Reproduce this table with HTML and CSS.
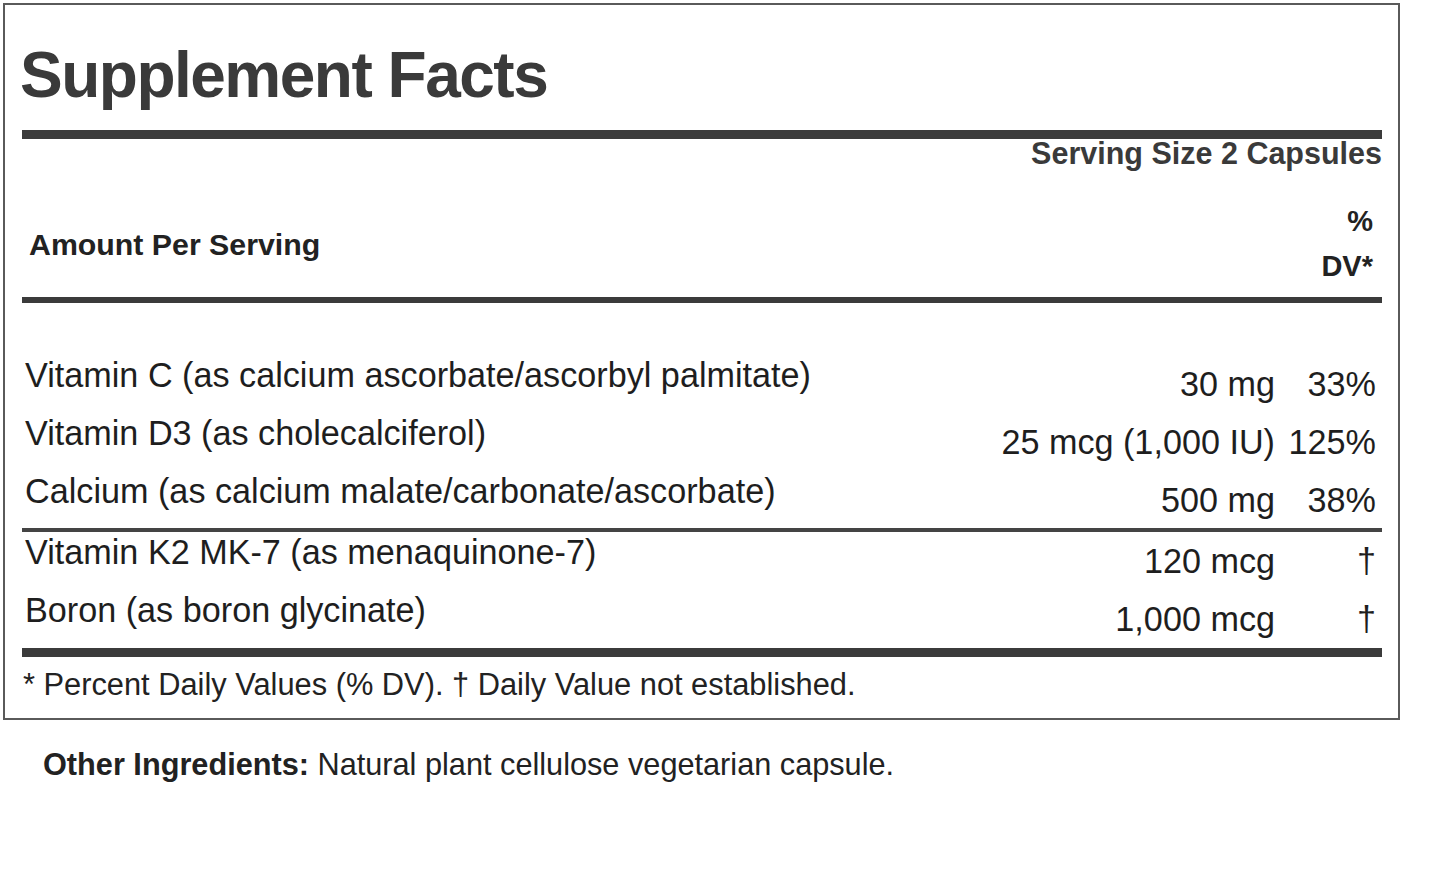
FILE: index.html
```html
<!DOCTYPE html>
<html>
<head>
<meta charset="utf-8">
<link rel="stylesheet" href="styles.css">
</head>
<body>
<div class="facts">
  <h1 class="title">Supplement Facts</h1>
  <div class="rule rule-thick"></div>
  <div class="serving">Serving Size 2 Capsules</div>
  <div class="head">
    <div class="head-label">Amount Per Serving</div>
    <div class="head-dv">%<br>DV*</div>
  </div>
  <div class="rule rule-mid"></div>
  <div class="rows rows-first">
    <div class="row"><span class="name">Vitamin C (as calcium ascorbate/ascorbyl palmitate)</span><span class="amt">30 mg</span><span class="dv">33%</span></div>
    <div class="row"><span class="name">Vitamin D3 (as cholecalciferol)</span><span class="amt">25 mcg (1,000 IU)</span><span class="dv">125%</span></div>
    <div class="row"><span class="name">Calcium (as calcium malate/carbonate/ascorbate)</span><span class="amt">500 mg</span><span class="dv">38%</span></div>
  </div>
  <div class="rule rule-thin"></div>
  <div class="rows">
    <div class="row"><span class="name">Vitamin K2 MK-7 (as menaquinone-7)</span><span class="amt">120 mcg</span><span class="dv">†</span></div>
    <div class="row"><span class="name">Boron (as boron glycinate)</span><span class="amt">1,000 mcg</span><span class="dv">†</span></div>
  </div>
  <div class="rule rule-thick"></div>
  <p class="foot">* Percent Daily Values (% DV). † Daily Value not established.</p>
</div>
<p class="other"><strong>Other Ingredients:</strong> Natural plant cellulose vegetarian capsule.</p>
</body>
</html>
```

FILE: styles.css
```css
* { box-sizing: border-box; }
body {
  margin: 0;
  background: #fff;
  font-family: "Liberation Sans", Arial, sans-serif;
  color: #222;
}
.facts {
  margin: 3px 0 0 3px;
  width: 1397px;
  height: 717px;
  border: 2px solid #5a5a5a;
  padding: 34px 16px 0 17px;
}
.title {
  margin: 0 0 19px -2px;
  font-size: 64px;
  line-height: 72px;
  font-weight: bold;
  letter-spacing: -1.5px;
  color: #3a3a3a;
}
.rule { background: #3b3b3b; }
.rule-thick { height: 9px; }
.rule-mid { height: 6px; margin-top: 7.5px; }
.rule-thin { height: 4px; background: #444; }
.serving {
  text-align: right;
  font-weight: bold;
  font-size: 30.5px;
  line-height: 28px;
  color: #3a3a3a;
}
.head {
  margin-top: 32px;
  display: flex;
  justify-content: space-between;
  align-items: center;
  padding: 0 9px 0 7px;
  font-weight: bold;
  font-size: 29px;
  line-height: 45px;
  color: #222;
}
.head-label { font-size: 30.3px; }
.head-dv { text-align: right; }
.rows-first { padding-top: 52px; }
.row {
  display: grid;
  grid-template-columns: 1fr auto 101px;
  height: 58px;
  padding: 0 6px 0 3px;
  font-size: 34.2px;
  line-height: 40px;
  color: #1e1e1e;
}
.rows-first .row:last-child { height: 57px; }
.amt, .dv {
  text-align: right;
  padding-top: 9px;
  white-space: nowrap;
}
.foot {
  margin: 10.5px 0 0 1px;
  font-size: 30.8px;
  line-height: 36px;
  color: #222;
}
.other {
  margin: 26.5px 0 0 43px;
  font-size: 30.7px;
  line-height: 36px;
  color: #222;
}
.other strong { font-weight: bold; }
```
